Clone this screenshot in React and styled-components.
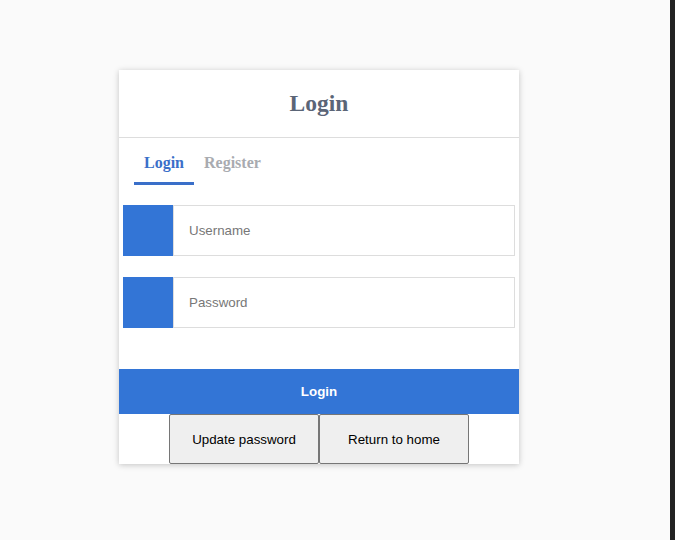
import React, { useState } from 'react';
import styled, { createGlobalStyle } from 'styled-components';

const Global = createGlobalStyle`
  html, body { margin: 0; padding: 0; }
  body {
    background: #fafafa;
    font-family: "Liberation Sans", Arial, sans-serif;
  }
`;

const Page = styled.div`
  display: flex;
  height: 540px;
  width: 675px;
`;

const Main = styled.main`
  flex: 1;
  padding: 70px 0 0 119px;
`;

const Strip = styled.div`
  width: 5px;
  background: #222;
`;

const Card = styled.div`
  width: 400px;
  background: #fff;
  box-shadow: 0 1px 6px rgba(0, 0, 0, 0.22);
  display: flex;
  flex-direction: column;
`;

const Header = styled.div`
  height: 67px;
  border-bottom: 1px solid #ddd;
  display: flex;
  align-items: center;
  justify-content: center;
`;

const Title = styled.h2`
  margin: 0;
  font-family: "Liberation Serif", "Times New Roman", serif;
  font-weight: 700;
  font-size: 23.5px;
  color: #5b6577;
`;

const Tabs = styled.div`
  display: flex;
  padding: 0 15px;
  height: 47px;
`;

const Tab = styled.button`
  border: none;
  background: none;
  padding: 5px 10px 0;
  margin: 0;
  font-family: "Liberation Serif", "Times New Roman", serif;
  font-weight: 700;
  font-size: 16px;
  color: ${p => (p.$active ? '#3a6fc9' : '#a9abb0')};
  border-bottom: 3px solid ${p => (p.$active ? '#3a6fc9' : 'transparent')};
  cursor: pointer;
`;

const Form = styled.form`
  display: flex;
  flex-direction: column;
  padding: 20px 4px 0;
  gap: 21px;
`;

const Field = styled.div`
  display: flex;
  height: 51px;
`;

const Addon = styled.span`
  width: 50px;
  background: #3375d6;
`;

const Input = styled.input`
  flex: 1;
  border: 1px solid #ddd;
  padding: 0 15px;
  font-family: "Liberation Sans", Arial, sans-serif;
  font-size: 13.33px;
  color: #333;
  outline: none;
  &::placeholder { color: #777; }
`;

const Submit = styled.button`
  margin-top: 41px;
  height: 45px;
  border: none;
  background: #3375d6;
  color: #fff;
  font-family: "Liberation Sans", Arial, sans-serif;
  font-weight: 700;
  font-size: 13.33px;
  cursor: pointer;
`;

const Actions = styled.div`
  display: flex;
  justify-content: center;
`;

const Plain = styled.button`
  width: 150px;
  height: 50px;
  background: #efefef;
  border: 1px solid #767676;
  border-radius: 2px;
  font-family: "Liberation Sans", Arial, sans-serif;
  font-size: 13.33px;
  color: #000;
`;

export default function App() {
  const [tab, setTab] = useState('login');
  return (
    <Page>
      <Global />
      <Main>
        <Card>
          <Header>
            <Title>Login</Title>
          </Header>
          <Tabs>
            <Tab $active={tab === 'login'} onClick={() => setTab('login')}>Login</Tab>
            <Tab $active={tab === 'register'} onClick={() => setTab('register')}>Register</Tab>
          </Tabs>
          <Form onSubmit={e => e.preventDefault()}>
            <Field>
              <Addon />
              <Input placeholder="Username" />
            </Field>
            <Field>
              <Addon />
              <Input type="password" placeholder="Password" />
            </Field>
          </Form>
          <Submit>Login</Submit>
          <Actions>
            <Plain>Update password</Plain>
            <Plain>Return to home</Plain>
          </Actions>
        </Card>
      </Main>
      <Strip />
    </Page>
  );
}
